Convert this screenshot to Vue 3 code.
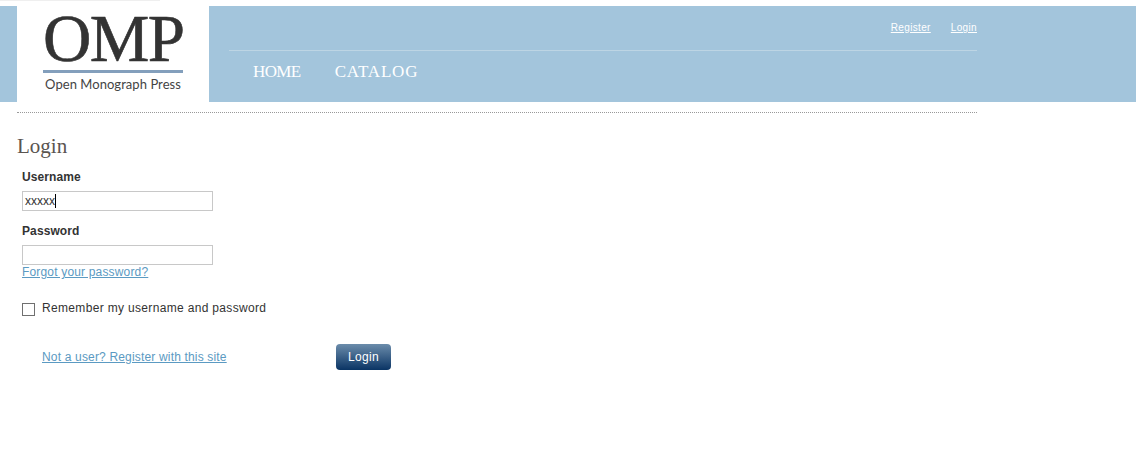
<script setup>
const username = 'xxxxx'
</script>

<template>
  <div class="page">
    <div class="top-strip"></div>
    <header class="header">
      <div class="logo">
        <div class="logo-mark">OMP</div>
        <div class="logo-bar"></div>
        <div class="logo-name">Open Monograph Press</div>
      </div>
      <div class="head-main">
        <div class="user-links">
          <a href="#">Register</a>
          <a href="#">Login</a>
        </div>
        <nav class="nav">
          <a class="nav-home" href="#">HOME</a>
          <a class="nav-catalog" href="#">CATALOG</a>
        </nav>
      </div>
    </header>
    <main class="main">
      <h2 class="title">Login</h2>
      <form class="form" @submit.prevent>
        <label class="label">Username</label>
        <div class="input focus"><span class="typed">{{ username }}</span><span class="caret"></span></div>
        <label class="label second">Password</label>
        <div class="input"></div>
        <a class="link forgot" href="#">Forgot your password?</a>
        <div class="remember">
          <span class="check"></span>
          <span class="remember-text">Remember my username and password</span>
        </div>
        <div class="actions">
          <a class="link register" href="#">Not a user? Register with this site</a>
          <button class="btn" type="button">Login</button>
        </div>
      </form>
    </main>
  </div>
</template>

<style scoped>
.page {
  width: 1136px;
  height: 468px;
  overflow: hidden;
  background: #fff;
  font-family: "Liberation Sans", Arial, sans-serif;
  font-size: 12px;
  color: #333;
}
.top-strip {
  width: 160px;
  height: 1px;
  margin-bottom: 5px;
  background: #efefef;
}
.header {
  display: flex;
  height: 96px;
  padding-left: 17px;
  background: #a3c5dc;
}
.logo {
  width: 192px;
  flex: none;
  background: #fff;
  display: flex;
  flex-direction: column;
  align-items: center;
}
.logo-mark {
  width: 140px;
  height: 63px;
  padding-top: 1px;
  font-family: "Liberation Serif", serif;
  font-size: 67px;
  line-height: 63px;
  letter-spacing: -1.6px;
  color: #333;
  -webkit-text-stroke: 0.6px #333;
  text-align: left;
  white-space: nowrap;
}
.logo-bar {
  width: 140px;
  height: 3px;
  background: #839fbc;
}
.logo-name {
  margin-top: 3px;
  font-family: Lato, sans-serif;
  font-size: 13px;
  line-height: 16px;
  letter-spacing: 0.05px;
  color: #444;
  white-space: nowrap;
}
.head-main {
  width: 748px;
  margin-left: 20px;
  display: flex;
  flex-direction: column;
}
.user-links {
  height: 29px;
  border-bottom: 1px solid #bdd5e4;
  display: flex;
  justify-content: flex-end;
  gap: 20px;
  padding-top: 15px;
  font-size: 10px;
  line-height: 13px;
  letter-spacing: 0.35px;
}
.user-links a {
  color: #fff;
}
.nav {
  display: flex;
  gap: 34px;
  padding: 11px 0 0 24px;
  font-family: "Liberation Serif", serif;
  font-size: 17px;
  line-height: 20px;
}
.nav a {
  color: #fff;
  text-decoration: none;
}
.nav-home {
  letter-spacing: -0.6px;
}
.nav-catalog {
  letter-spacing: 0.8px;
}
.main {
  width: 960px;
  margin-left: 17px;
  margin-top: 10px;
  border-top: 1px dotted #999;
}
.title {
  margin: 21px 0 0;
  font-family: "Liberation Serif", serif;
  font-weight: normal;
  font-size: 21px;
  line-height: 24px;
  color: #5a5450;
}
.form {
  margin-left: 5px;
  display: flex;
  flex-direction: column;
  align-items: flex-start;
}
.label {
  margin-top: 12px;
  font-weight: bold;
  font-size: 12px;
  line-height: 14px;
  height: 14px;
  letter-spacing: 0.1px;
}
.label.second {
  margin-top: 13px;
}
.input {
  box-sizing: border-box;
  width: 191px;
  height: 20px;
  margin-top: 7px;
  border: 1px solid #c8c8c8;
  padding-left: 2px;
  display: flex;
  align-items: center;
  font-size: 12px;
}
.caret {
  width: 1px;
  height: 14px;
  background: #000;
}
.link {
  color: #5b9ac2;
  font-size: 12px;
  line-height: 14px;
  letter-spacing: 0.17px;
}
.remember {
  display: flex;
  align-items: flex-start;
  gap: 7px;
  margin-top: 22px;
  line-height: 14px;
  color: #333;
}
.remember-text {
  letter-spacing: 0.33px;
}
.check {
  box-sizing: border-box;
  width: 13px;
  height: 13px;
  margin-top: 2px;
  border: 1px solid #707070;
  background: #fff;
}
.actions {
  display: flex;
  align-items: center;
  margin-top: 28px;
  padding-left: 20px;
}
.register {
  width: 294px;
}
.btn {
  width: 55px;
  height: 26px;
  border: 0;
  border-radius: 4px;
  padding: 0;
  background: linear-gradient(#6b8cab, #0a3464);
  color: #fff;
  font-family: "Liberation Sans", Arial, sans-serif;
  font-size: 12px;
  letter-spacing: 0.3px;
}
</style>
